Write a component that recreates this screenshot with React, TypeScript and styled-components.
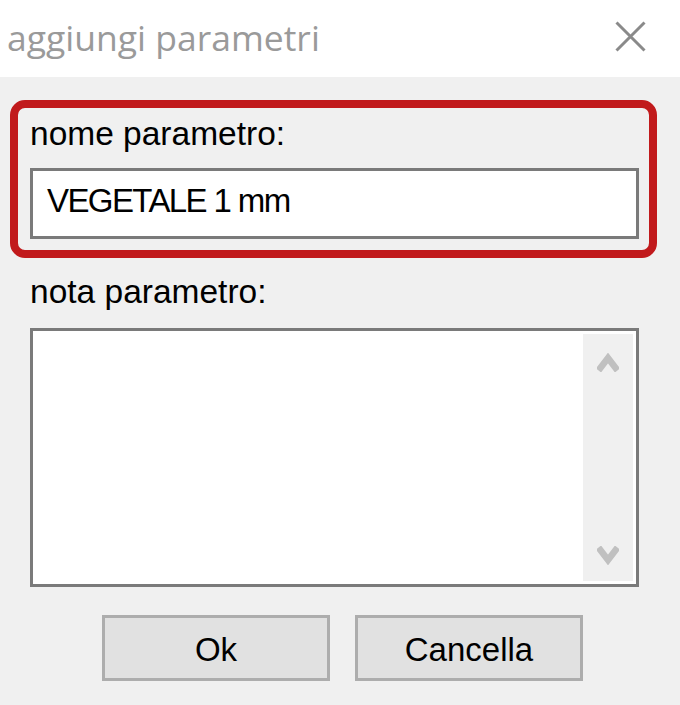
import React from "react";
import styled, { createGlobalStyle } from "styled-components";

const Global = createGlobalStyle`
  html, body { margin: 0; padding: 0; background: #f0f0f0; }
  body { width: 680px; height: 705px; overflow: hidden; }
`;

const Window = styled.div`
  width: 680px;
  height: 705px;
  background: #f0f0f0;
  display: flex;
  flex-direction: column;
  font-family: "Liberation Sans", Arial, sans-serif;
`;

const TitleBar = styled.div`
  height: 77px;
  background: #ffffff;
  display: flex;
  align-items: flex-start;
  justify-content: space-between;
  padding: 0 34px 0 7px;
  box-sizing: border-box;
`;

const Title = styled.div`
  font-family: "Open Sans", "Noto Sans", sans-serif;
  font-size: 35.5px;
  line-height: 46px;
  margin-top: 14px;
  color: #9a9a9a;
`;

const Close = styled.div`
  margin-top: 21px;
  width: 31px;
  height: 31px;
  display: flex;
`;

const Content = styled.div`
  display: flex;
  flex-direction: column;
  padding: 23px 23px 0 10px;
`;

const Highlight = styled.div`
  border: 8px solid #c11a1c;
  border-radius: 15px;
  padding: 9px 10px 11px 12px;
  display: flex;
  flex-direction: column;
`;

const Label = styled.div`
  font-size: 33.5px;
  line-height: 33px;
  color: #000;
`;

const Field = styled.div`
  margin-top: 18px;
  height: 71px;
  box-sizing: border-box;
  border: 3px solid #7a7a7a;
  background: #fff;
  padding: 13px 0 0 14px;
  font-size: 33px;
  line-height: 33px;
  letter-spacing: -1.6px;
  color: #000;
`;

const NoteSection = styled.div`
  margin: 17px 18px 0 20px;
  display: flex;
  flex-direction: column;
`;

const Memo = styled.div`
  margin-top: 20px;
  height: 259px;
  box-sizing: border-box;
  border: 3px solid #7a7a7a;
  background: #fff;
  display: flex;
  justify-content: flex-end;
  padding: 3px;
`;

const ScrollBar = styled.div`
  width: 50px;
  background: #f0f0f0;
  display: flex;
  flex-direction: column;
  justify-content: space-between;
  align-items: center;
  padding: 19px 0 16px;
  box-sizing: border-box;
`;

const Buttons = styled.div`
  display: flex;
  gap: 25px;
  margin-top: 28px;
  padding-left: 92px;
`;

const Button = styled.div`
  width: 228px;
  height: 66px;
  box-sizing: border-box;
  border: 3px solid #adadad;
  background: #e1e1e1;
  display: flex;
  align-items: center;
  justify-content: center;
  font-size: 33px;
  line-height: 33px;
  color: #000;
  padding-top: 2px;
`;

const Chevron = ({ up }: { up?: boolean }) => (
  <svg width="22" height="19" viewBox="0 0 22 19">
    <path
      d={up ? "M1.5 17.5 L11 5 L20.5 17.5" : "M1.5 1.5 L11 14 L20.5 1.5"}
      fill="none"
      stroke="#c0c0c0"
      strokeWidth="6.5"
      strokeLinejoin="miter"
    />
  </svg>
);

export default function App() {
  return (
    <>
      <Global />
      <Window>
        <TitleBar>
          <Title>aggiungi parametri</Title>
          <Close>
            <svg width="31" height="31" viewBox="0 0 31 31">
              <path d="M1.5 1.5 L29.5 29.5 M29.5 1.5 L1.5 29.5" stroke="#8a8a8a" strokeWidth="3" />
            </svg>
          </Close>
        </TitleBar>
        <Content>
          <Highlight>
            <Label>nome parametro:</Label>
            <Field>VEGETALE 1 mm</Field>
          </Highlight>
          <NoteSection>
            <Label>nota parametro:</Label>
            <Memo>
              <ScrollBar>
                <Chevron up />
                <Chevron />
              </ScrollBar>
            </Memo>
          </NoteSection>
          <Buttons>
            <Button>Ok</Button>
            <Button>Cancella</Button>
          </Buttons>
        </Content>
      </Window>
    </>
  );
}
